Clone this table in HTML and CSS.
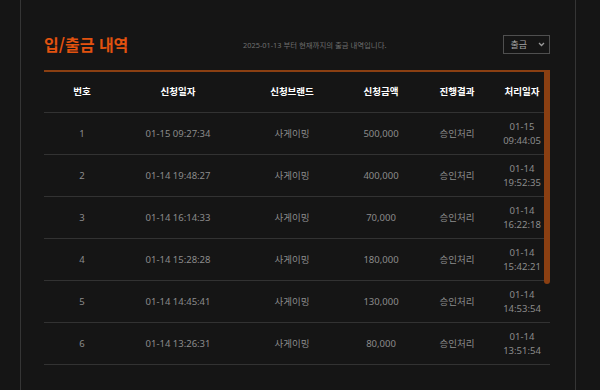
FILE: index.html
```html
<!DOCTYPE html>
<html lang="ko">
<head>
<meta charset="utf-8">
<link rel="stylesheet" href="styles.css">
</head>
<body>
<div class="page">
  <div class="head">
    <h1 class="title">입/출금 내역</h1>
    <p class="sub">2025-01-13 부터 현재까지의 출금 내역입니다.</p>
    <div class="select"><span>출금</span><svg class="chev" width="7" height="5" viewBox="0 0 7 5"><path d="M1 1l2.5 2.5L6 1" fill="none" stroke="#9a9a9a" stroke-width="1.3"/></svg></div>
  </div>
  <div class="tablewrap">
    <div class="row hrow">
      <div>번호</div><div>신청일자</div><div>신청브랜드</div><div>신청금액</div><div>진행결과</div><div>처리일자</div>
    </div>
    <div class="row"><div>1</div><div>01-15 09:27:34</div><div>사게이밍</div><div>500,000</div><div>승인처리</div><div>01-15<br>09:44:05</div></div>
    <div class="row"><div>2</div><div>01-14 19:48:27</div><div>사게이밍</div><div>400,000</div><div>승인처리</div><div>01-14<br>19:52:35</div></div>
    <div class="row"><div>3</div><div>01-14 16:14:33</div><div>사게이밍</div><div>70,000</div><div>승인처리</div><div>01-14<br>16:22:18</div></div>
    <div class="row"><div>4</div><div>01-14 15:28:28</div><div>사게이밍</div><div>180,000</div><div>승인처리</div><div>01-14<br>15:42:21</div></div>
    <div class="row"><div>5</div><div>01-14 14:45:41</div><div>사게이밍</div><div>130,000</div><div>승인처리</div><div>01-14<br>14:53:54</div></div>
    <div class="row"><div>6</div><div>01-14 13:26:31</div><div>사게이밍</div><div>80,000</div><div>승인처리</div><div>01-14<br>13:51:54</div></div>
    <div class="thumb"></div>
  </div>
</div>
</body>
</html>
```
FILE: styles.css
```css
html, body {
  margin: 0;
  padding: 0;
  background: #151515;
  height: 100%;
  overflow: hidden;
}
body {
  font-family: "Noto Sans", "Noto Sans CJK KR", sans-serif;
}
.page {
  margin-left: 20px;
  width: 556px;
  height: 390px;
  border-left: 1px solid #353535;
  border-right: 1px solid #353535;
  padding: 35px 25px 0 23px;
  box-sizing: border-box;
}
.head {
  display: flex;
  align-items: center;
  height: 19px;
}
.title {
  margin: 0;
  font-family: "Noto Sans CJK KR", sans-serif;
  font-size: 16px;
  font-weight: 700;
  color: #e2520f;
  line-height: 19px;
  width: 199px;
}
.sub {
  margin: 0;
  font-size: 7.4px;
  color: #6f6f6f;
  flex: 1;
  line-height: 19px;
  padding-top: 1px;
}
.select {
  display: flex;
  align-items: center;
  justify-content: flex-end;
  gap: 11px;
  padding-right: 4px;
  box-sizing: border-box;
  width: 47px;
  height: 19px;
  border: 1px solid #4f4f4f;
  font-size: 9px;
  color: #a5a5a5;
}
.chev { display: block; }
.tablewrap {
  margin-top: 16px;
  border-top: 2px solid #8a3f12;
  position: relative;
  width: 506px;
}
.row {
  display: grid;
  grid-template-columns: 76px 116px 112px 66px 86px 44px;
  height: 41px;
  border-bottom: 1px solid #323232;
  align-items: center;
  text-align: center;
  font-size: 9.5px;
  color: #8c8c8c;
  line-height: 14px;
}
.row > div { white-space: nowrap; }
.hrow {
  height: 40px;
  color: #fff;
  font-weight: 700;
}
.thumb {
  position: absolute;
  right: 0;
  top: -1px;
  width: 6px;
  height: 213px;
  background: #8a3f12;
  border-radius: 0 0 3px 3px;
}
```
